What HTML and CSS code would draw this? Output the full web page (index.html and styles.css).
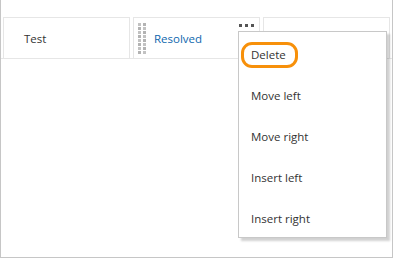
FILE: index.html
```html
<!DOCTYPE html>
<html>
<head>
<meta charset="utf-8">
<link rel="stylesheet" href="styles.css">
</head>
<body>
<div class="frame">
  <div class="row">
    <div class="card"><span class="title">Test</span></div>
    <div class="card card-active">
      <div class="handle">
        <i></i><i></i><i></i><i></i><i></i><i></i><i></i><i></i>
        <i></i><i></i><i></i><i></i><i></i><i></i><i></i><i></i>
      </div>
      <span class="title link">Resolved</span>
      <div class="more"><i></i><i></i><i></i></div>
    </div>
    <div class="card"></div>
  </div>
  <ul class="menu">
    <li class="item"><span class="hl">Delete</span></li>
    <li class="item">Move left</li>
    <li class="item">Move right</li>
    <li class="item">Insert left</li>
    <li class="item">Insert right</li>
  </ul>
</div>
</body>
</html>
```
FILE: styles.css
```css
html, body {
  margin: 0;
  padding: 0;
  background: #fff;
}
body {
  width: 394px;
  height: 258px;
  font-family: "Open Sans", "Noto Sans", sans-serif;
  font-size: 11.5px;
  color: #333;
}
.frame {
  position: relative;
  box-sizing: border-box;
  width: 393px;
  height: 258px;
  border-left: 1px solid #c6c6c6;
  border-right: 1px solid #c6c6c6;
  border-bottom: 1px solid #c6c6c6;
}
.row {
  display: flex;
  gap: 3px;
  padding: 17px 0 0 2px;
  border-bottom: 1px solid #e6e6e6;
}
.card {
  position: relative;
  box-sizing: border-box;
  width: 127px;
  height: 41px;
  border: 1px solid #e6e6e6;
  border-bottom: none;
  display: flex;
  align-items: center;
  padding: 2px 0 0 20px;
}
.card-active {
  padding-left: 4px;
}
.handle {
  display: grid;
  grid-template-columns: 3px 3px;
  grid-auto-rows: 3px;
  column-gap: 2px;
  row-gap: 1px;
  margin-right: 8px;
  margin-top: -2px;
}
.handle i {
  display: block;
  background: #b3b3b3;
}
.handle i:nth-child(4n+1),
.handle i:nth-child(4n+4) {
  background: #c2c2c2;
}
.title {
  line-height: 16px;
}
.link {
  color: #0f67ae;
}
.more {
  position: absolute;
  top: 6px;
  right: 5px;
  display: flex;
  gap: 3px;
}
.more i {
  display: block;
  width: 3px;
  height: 3px;
  background: #555;
}
.menu {
  position: absolute;
  left: 237px;
  top: 31px;
  box-sizing: border-box;
  width: 149px;
  height: 207px;
  margin: 0;
  padding: 2px 0 0 0;
  list-style: none;
  background: #fff;
  border: 1px solid #c8c8c8;
  box-shadow: 3px 3px 2px rgba(0, 0, 0, 0.18);
}
.item {
  height: 41px;
  line-height: 41px;
  padding-left: 12px;
  white-space: nowrap;
}
.hl {
  position: relative;
}
.hl::after {
  content: "";
  position: absolute;
  left: -10px;
  right: -12px;
  top: -5px;
  bottom: -6px;
  border: 3px solid #f7900a;
  border-radius: 11px;
}
```
